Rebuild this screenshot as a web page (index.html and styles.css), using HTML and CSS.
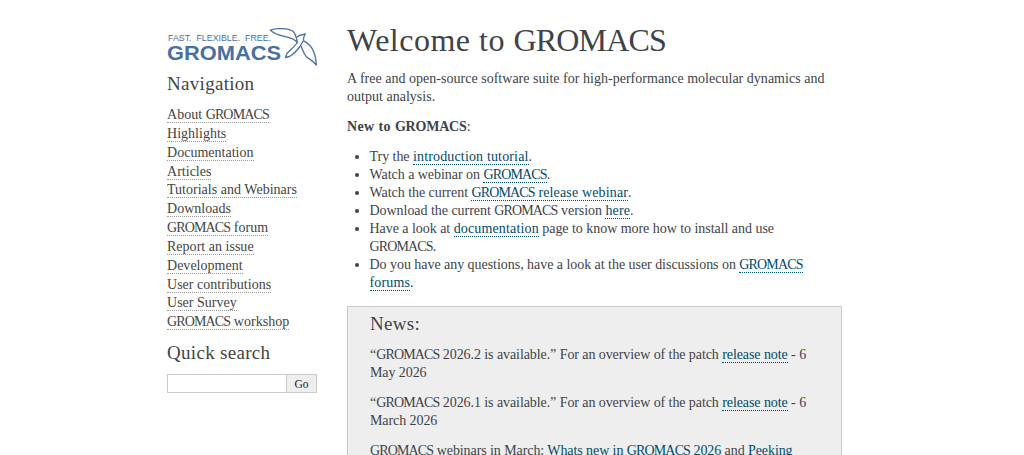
FILE: index.html
```html
<!DOCTYPE html>
<html lang="en">
<head>
  <meta charset="UTF-8">
  <meta name="viewport" content="width=device-width, initial-scale=1.0">
  <title>Welcome to GROMACS</title>
  <link rel="stylesheet" href="styles.css">
</head>
<body>
  <div class="document">
    <aside class="sidebar">
      <a class="logo" href="#">
        <svg width="151" height="39" viewBox="0 0 151 39" role="img" aria-label="GROMACS">
          <text class="logo-tag" x="1" y="12.500" textLength="103" lengthAdjust="spacingAndGlyphs" xml:space="preserve">FAST.  FLEXIBLE.  FREE.</text>
          <text class="logo-name" x="0" y="32.300" textLength="114" lengthAdjust="spacingAndGlyphs">GROMACS</text>
          <g class="logo-bird">
            <path d="M103.300 2 C109 0 121 0 126 3.300 C129 6 129.500 10 130.300 14.500 C128 11.500 125 10.300 121.300 9.300 C114 8 107 6 103.300 2 Z"/>
            <path d="M129.500 9.500 L132.300 7.500 L138.300 5.800 L137 8.500 L136.300 12.700"/>
            <path d="M136.300 12.700 C141 15 145 19 147 24.500 C148.800 29 149 33 149.300 37 C146 32.500 142 31 139.700 29 C136.500 26 136 22.500 134 18"/>
            <path d="M130.300 14.500 C127.500 19 123 22 119.700 25.700 L118.500 29.500 L122.500 28.500 C126 26.500 130 22.500 133 18.500 L136.300 12.700"/>
          </g>
        </svg>
      </a>
      <h3>Navigation</h3>
      <ul class="nav">
        <li><a href="#">About <span class="name">GROMACS</span></a></li>
        <li><a href="#">Highlights</a></li>
        <li><a href="#">Documentation</a></li>
        <li><a href="#">Articles</a></li>
        <li><a href="#">Tutorials and Webinars</a></li>
        <li><a href="#">Downloads</a></li>
        <li><a href="#"><span class="name">GROMACS</span> forum</a></li>
        <li><a href="#">Report an issue</a></li>
        <li><a href="#">Development</a></li>
        <li><a href="#">User contributions</a></li>
        <li><a href="#">User Survey</a></li>
        <li><a href="#"><span class="name">GROMACS</span> workshop</a></li>
      </ul>
      <h3>Quick search</h3>
      <form class="search">
        <input type="text" name="q" aria-label="Quick search">
        <button type="button">Go</button>
      </form>
    </aside>

    <main class="body">
      <h1>Welcome to <span class="name">GROMACS</span></h1>
      <p>A free and open-source software suite for high-performance molecular dynamics and<br>output analysis.</p>
      <p><strong>New to <span class="name">GROMACS</span></strong>:</p>
      <ul class="intro">
        <li>Try the <a href="#">introduction tutorial</a>.</li>
        <li>Watch a webinar on <a href="#"><span class="name">GROMACS</span></a>.</li>
        <li>Watch the current <a href="#"><span class="name">GROMACS</span> release webinar</a>.</li>
        <li>Download the current <span class="name">GROMACS</span> version <a href="#">here</a>.</li>
        <li>Have a look at <a href="#">documentation</a> page to know more how to install and use<br><span class="name">GROMACS</span>.</li>
        <li>Do you have any questions, have a look at the user discussions on <a href="#"><span class="name">GROMACS</span><br>forums</a>.</li>
      </ul>
      <div class="news">
        <h3>News:</h3>
        <p>“<span class="name">GROMACS</span> 2026.2 is available.” For an overview of the patch <a href="#">release note</a> - 6<br>May 2026</p>
        <p>“<span class="name">GROMACS</span> 2026.1 is available.” For an overview of the patch <a href="#">release note</a> - 6<br>March 2026</p>
        <p><span class="name">GROMACS</span> webinars in March: <a href="#">Whats new in <span class="name">GROMACS</span> 2026</a> and <a href="#">Peeking</a></p>
      </div>
    </main>
  </div>
</body>
</html>
```
FILE: styles.css
```css
body {
  margin: 0;
  height: 100vh;
  overflow: hidden;
  background: #fff;
  color: #3e4349;
  font-family: Georgia, 'Liberation Serif', serif;
  font-size: 14px;
  line-height: 17.9px;
  letter-spacing: 0.02px;
}
.document {
  display: flex;
  gap: 30px;
  width: 675px;
  height: 100%;
  margin-left: 167px;
  overflow: hidden;
}
.name {
  letter-spacing: -0.85px;
}
.sidebar {
  width: 150px;
  flex: none;
  padding-top: 28px;
}
.logo {
  display: block;
  height: 39px;
}
.logo svg {
  display: block;
}
.logo text {
  font-family: 'Liberation Sans', Arial, sans-serif;
  letter-spacing: 0;
  fill: #4a709f;
}
.logo .logo-tag {
  font-size: 8.5px;
}
.logo .logo-name {
  font-size: 21px;
  font-weight: bold;
}
.logo-bird {
  fill: none;
  stroke: #4a709f;
  stroke-width: 1.3;
  stroke-linejoin: round;
}
h1, h3 {
  margin: 0;
  font-weight: normal;
}
h1 {
  font-size: 32px;
  line-height: 40px;
  letter-spacing: 0.5px;
}
h1 .name {
  letter-spacing: -0.8px;
}
strong {
  letter-spacing: 0.4px;
}
strong .name {
  letter-spacing: -0.2px;
}
h3 {
  font-size: 19px;
  line-height: 24px;
  letter-spacing: 0.3px;
}
.sidebar h3 {
  margin-top: 5px;
  color: #444;
}
.nav {
  list-style: none;
  margin: 10px 0 9px;
  padding: 0;
}
.nav li {
  height: 18.85px;
}
.nav a {
  color: #444;
  border-bottom: 1px dotted #999;
}
a {
  text-decoration: none;
  color: #004b6b;
  border-bottom: 1px dotted #004b6b;
}
.sidebar .logo {
  border: 0;
}
.search {
  display: flex;
  margin-top: 9px;
}
.search input {
  box-sizing: border-box;
  width: 120px;
  height: 19px;
  padding: 0 4px;
  border: 1px solid #ccc;
}
.search button {
  box-sizing: border-box;
  width: 31px;
  height: 19px;
  margin-left: -1px;
  padding: 0;
  border: 1px solid #ccc;
  background: #eee;
  color: #222;
  font-family: inherit;
  font-size: 11.5px;
}
.body {
  width: 495px;
  flex: none;
  padding-top: 20px;
  white-space: nowrap;
}
.body p {
  margin: 0 0 12.2px;
}
.body h1 {
  margin-bottom: 10px;
}
.intro {
  margin: 0 0 14.6px;
  padding-top: 0.4px;
  padding-left: 22.5px;
  letter-spacing: -0.04px;
}
.intro a {
  letter-spacing: 0.15px;
}
.news {
  box-sizing: border-box;
  height: 200px;
  padding: 5px 22px;
  border: 1px solid #ccc;
  background: #eee;
}
.news p {
  letter-spacing: -0.08px;
}
.news h3 {
  margin-bottom: 10px;
}
```
